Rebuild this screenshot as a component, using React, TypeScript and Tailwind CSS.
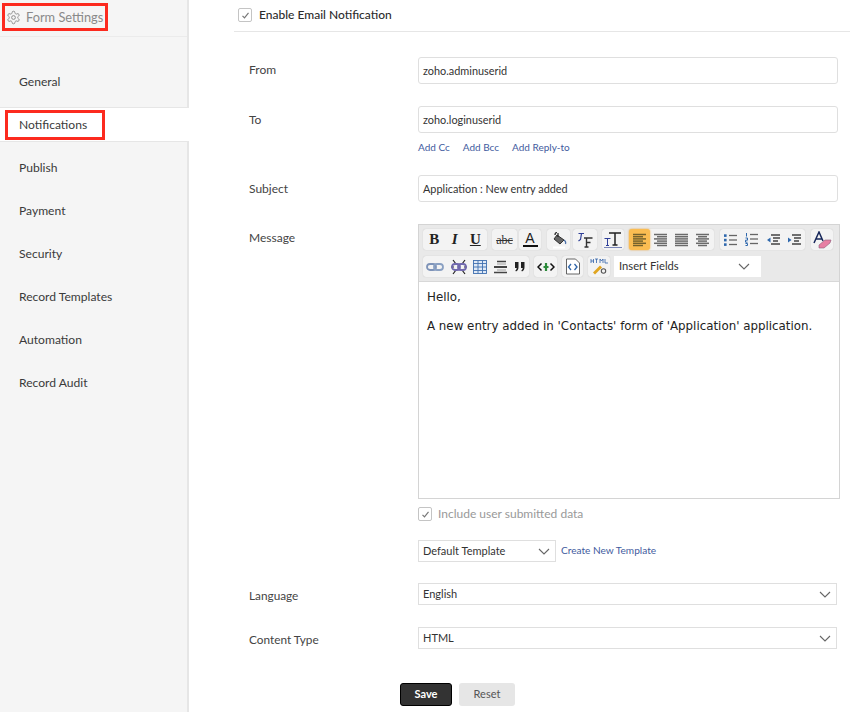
import React from "react";

const Chevron = () => (
  <svg width="12" height="7" viewBox="0 0 12 7" fill="none" stroke="#666" strokeWidth="1.1" className="shrink-0">
    <path d="M1 1l5 5 5-5" />
  </svg>
);

const Check = () => (
  <span className="flex h-[14px] w-[14px] shrink-0 items-center justify-center rounded-[2px] border border-[#c4c4c4] bg-white">
    <svg width="9" height="9" viewBox="0 0 9 9" fill="none" stroke="#777" strokeWidth="1.2">
      <path d="M1.5 4.8l2 2 4-5" />
    </svg>
  </span>
);

const Align = ({ rows, color = "#6a6a6a" }: { rows: [number, number][]; color?: string }) => (
  <svg width="15" height="14" viewBox="0 0 15 14" stroke={color} strokeWidth="1.5">
    {rows.map(([a, b], i) => (
      <path key={i} d={`M${a} ${1.5 + i * 2.2}H${b}`} />
    ))}
  </svg>
);

const Btn = ({ children, active = false }: { children: React.ReactNode; active?: boolean }) => (
  <span
    className={`flex h-full w-[21px] items-center justify-center ${
      active ? "rounded-[3px] bg-[#fbbd52] shadow-[0_0_2px_#f2a93a]" : ""
    }`}
  >
    {children}
  </span>
);

const Group = ({ children, w, className = "" }: { children: React.ReactNode; w: number; className?: string }) => (
  <span
    style={{ width: w }}
    className={`flex h-[21px] shrink-0 items-center justify-around rounded-[3px] bg-[#f3f3f3] shadow-[0_0_1px_#bbb] ${className}`}
  >
    {children}
  </span>
);

const Letter = ({ children, className = "" }: { children: React.ReactNode; className?: string }) => (
  <span className={`font-['Liberation_Serif',serif] text-[15px] font-bold leading-none text-[#222] ${className}`}>{children}</span>
);

const bullets = (
  <svg width="15" height="14" viewBox="0 0 15 14">
    {[2.5, 7, 11.5].map((y) => (
      <g key={y}>
        <rect x="1" y={y - 1.2} width="2.6" height="2.6" fill="#2f68ad" />
        <path d={`M6 ${y}H14`} stroke="#666" strokeWidth="1.3" />
      </g>
    ))}
  </svg>
);
const numbers = (
  <svg width="15" height="15" viewBox="0 0 15 15">
    <path d="M2.5 1v3.5M1.5 6h2v2.2h-2v2h2M1.5 11.5h2v2h-2" stroke="#2f68ad" strokeWidth="1" fill="none" />
    {[2.5, 7, 11.5].map((y) => (
      <path key={y} d={`M6 ${y}H14`} stroke="#666" strokeWidth="1.3" />
    ))}
  </svg>
);
const indent = (flip: boolean) => (
  <svg width="15" height="14" viewBox="0 0 15 14">
    <path d="M5 2H14M7 5H14M7 8H12M5 11H14" stroke="#444" strokeWidth="1.5" />
    <path d={flip ? "M4.5 4.5v5L1 7z" : "M1 4.5v5L4.5 7z"} fill="#2f68ad" />
  </svg>
);

const Toolbar = () => (
  <div className="border-b border-[#d8d8d8] bg-[#e9e9e9]">
    <div className="flex h-[31px] items-start pl-[4px] pt-[4px]">
      <Group w={64}>
        <Letter>B</Letter>
        <Letter className="italic">I</Letter>
        <Letter className="underline">U</Letter>
      </Group>
      <Group w={25} className="ml-[5px]">
        <span className="font-['Liberation_Serif',serif] text-[12px] leading-none text-[#333] line-through">abc</span>
      </Group>
      <Group w={22} className="ml-[2px]">
        <span className="flex flex-col items-center">
          <span className="font-['Liberation_Sans',sans-serif] text-[14px] leading-[13px] text-[#222]">A</span>
          <span className="h-[2px] w-[15px] bg-[#111]" />
        </span>
      </Group>
      <Group w={23} className="ml-[6px]">
        <svg width="18" height="18" viewBox="0 0 18 18">
          <path d="M7 4l7 5-4 4-6-5z" fill="#666" stroke="#222" strokeWidth="0.9" />
          <path d="M7 1.5c-1.5 0-2 1-2 2.5M8 2v4" stroke="#222" strokeWidth="1.2" fill="none" />
          <path d="M14 9c1.5 1 2 2.5 1.5 4" stroke="#4a6fa8" strokeWidth="1.2" fill="none" />
          <path d="M3 16.5h12" stroke="#fff" strokeWidth="2" />
        </svg>
      </Group>
      <Group w={24} className="ml-[3px]">
        <svg width="20" height="18" viewBox="0 0 20 18" fill="none">
          <path d="M3.5 2.5H9M6.5 2.5L5.5 8.5 3.5 10" stroke="#2f3f98" strokeWidth="1.2" />
          <path d="M9 7h8.5M11.5 7v9M9.5 16h4M11.5 11.5h4" stroke="#333" strokeWidth="1.4" />
        </svg>
      </Group>
      <Group w={22} className="ml-[5px]">
        <svg width="20" height="18" viewBox="0 0 20 18" fill="none">
          <path d="M6 2h12M12 2v12M9.5 14h5" stroke="#222" strokeWidth="1.5" />
          <path d="M1.5 7.5h6M4.5 7.5v7M3 14.5h3" stroke="#2f3f98" strokeWidth="1" />
          <path d="M1 16.5h18" stroke="#5a6aa8" strokeWidth="0.8" />
        </svg>
      </Group>
      <Group w={85} className="ml-[5px] !justify-start">
        <Btn active>
          <Align color="#75622c" rows={[[1, 14], [1, 11], [1, 14], [1, 11], [1, 14], [1, 11]]} />
        </Btn>
        <Btn>
          <Align rows={[[1, 14], [4, 14], [1, 14], [4, 14], [1, 14], [4, 14]]} />
        </Btn>
        <Btn>
          <Align rows={[[1, 14], [1, 14], [1, 14], [1, 14], [1, 14], [1, 14]]} />
        </Btn>
        <Btn>
          <Align rows={[[1, 14], [3, 12], [1, 14], [3, 12], [1, 14], [3, 12]]} />
        </Btn>
      </Group>
      <Group w={85} className="ml-[6px]">
        {bullets}
        {numbers}
        {indent(true)}
        {indent(false)}
      </Group>
      <Group w={22} className="ml-[6px]">
        <svg width="20" height="18" viewBox="0 0 20 18" fill="none">
          <path d="M2 12L7 1l4 9M4 8h6" stroke="#17275a" strokeWidth="1.5" />
          <path d="M7 14l6-5h6l-1 3-6 5H7z" fill="#e77fa3" stroke="#8f5a78" strokeWidth="0.6" />
        </svg>
      </Group>
    </div>
    <div className="flex h-[25px] items-start pl-[4px]">
      <Group w={106}>
        <svg width="18" height="14" viewBox="0 0 18 14" fill="none">
          <rect x="1" y="4" width="9" height="6" rx="3" stroke="#7e93b8" strokeWidth="1.8" />
          <rect x="8" y="4" width="9" height="6" rx="3" stroke="#8aa0c2" strokeWidth="1.8" />
        </svg>
        <svg width="18" height="18" viewBox="0 0 18 18" fill="none">
          <path d="M3 2l3 4M15 2l-3 4M1 9h3M17 9h-3M3 16l3-4M15 16l-3-4" stroke="#222" strokeWidth="1.2" />
          <rect x="2" y="6" width="8" height="6" rx="3" stroke="#7068ad" strokeWidth="1.8" />
          <rect x="8" y="6" width="8" height="6" rx="3" stroke="#7068ad" strokeWidth="1.8" />
        </svg>
        <svg width="14" height="14" viewBox="0 0 14 14" fill="#dfe9f6" stroke="#3f6fb0" strokeWidth="0.9">
          <rect x="0.5" y="0.5" width="13" height="13" />
          <path d="M0.5 3.5h13M0.5 7h13M0.5 10.5h13M5 0.5v13M9.5 0.5v13" />
        </svg>
        <svg width="15" height="14" viewBox="0 0 15 14" fill="none">
          <path d="M4 1.5h9M1 12.5h13" stroke="#444" strokeWidth="1.3" />
          <path d="M1 7h13" stroke="#444" strokeWidth="2" />
          <path d="M4 4h9M4 10h9" stroke="#888" strokeWidth="0.8" />
        </svg>
        <svg width="12" height="12" viewBox="0 0 12 12" fill="#222">
          <path d="M1 1h3.5v5c0 2-.7 3.5-2.5 4.500L1.300 9.500C2.300 8.800 2.700 8 2.700 7H1zM7 1h3.500v5c0 2-.7 3.500-2.500 4.500L7.300 9.500C8.300 8.800 8.700 8 8.700 7H7z" />
        </svg>
      </Group>
      <Group w={23} className="ml-[5px]">
        <svg width="18" height="10" viewBox="0 0 18 10" fill="none">
          <path d="M4.500 1.500L1 5l3.500 3.500M13.500 1.500L17 5l-3.500 3.500" stroke="#111" strokeWidth="1.5" />
          <path d="M9 1v8M6.500 5h5" stroke="#2c8a3a" strokeWidth="2.200" />
        </svg>
      </Group>
      <Group w={21} className="ml-[5px]">
        <svg width="16" height="17" viewBox="0 0 16 17" fill="#fff" stroke="#555" strokeWidth="0.9">
          <path d="M1.500 1h9l4 4v11h-13z" />
          <path d="M6 6L3.500 9 6 12M9.500 6l2.500 3-2.500 3" stroke="#2e64a8" strokeWidth="1.300" fill="none" />
        </svg>
      </Group>
      <Group w={22} className="ml-[5px]">
        <svg width="19" height="18" viewBox="0 0 19 18" fill="none">
          <path d="M1 1v4M3.500 1v4M1 3h2.500M5 1h3M6.500 1v4M10 5V1l1.500 2L13 1v4M15 1v4h3" stroke="#2e5fa8" strokeWidth="0.8" />
          <path d="M4 15.500l7-7" stroke="#e0a520" strokeWidth="2.800" />
          <circle cx="13.500" cy="13" r="2.200" stroke="#555" strokeWidth="1.100" />
        </svg>
      </Group>
      <span className="ml-[4px] flex h-[21px] w-[147px] shrink-0 items-center justify-between bg-white pl-[5px] pr-[11px] text-[11.2px] text-[#333]">
        Insert Fields
        <Chevron />
      </span>
    </div>
  </div>
);

const Label = ({ children, className = "pt-[6px]" }: { children: React.ReactNode; className?: string }) => (
  <div className={`ml-[45px] w-[169px] shrink-0 pl-[15px] text-[12px] leading-[16px] text-[#444] ${className}`}>{children}</div>
);

const Input = ({ children }: { children: React.ReactNode }) => (
  <div className="ml-[15px] flex h-[27px] w-[420px] items-center rounded-[3px] border border-[#dfdfdf] bg-white pl-[4px] pt-[1px] text-[10.9px] text-[#333]">
    {children}
  </div>
);

const Select = ({ children, className = "" }: { children: React.ReactNode; className?: string }) => (
  <div className={`flex h-[22px] items-center justify-between border border-[#dfdfdf] bg-white pl-[4px] pr-[5px] text-[11px] text-[#333] ${className}`}>
    {children}
    <Chevron />
  </div>
);

const nav = ["General", "Notifications", "Publish", "Payment", "Security", "Record Templates", "Automation", "Record Audit"];

export default function App() {
  return (
    <div className="relative flex h-[712px] w-[850px] overflow-hidden bg-white font-['Lato',sans-serif]">
      <aside className="relative h-full w-[189px] shrink-0 border-r-2 border-[#e6e6e6] bg-[#f5f5f5]">
        <div className="flex h-[37px] items-center gap-[5px] border-b border-[#ebebeb] pl-[6px] pb-[1px] text-[12.8px] text-[#8a8a8a]">
          <svg width="15" height="15" viewBox="0 0 24 24" fill="none" stroke="#8c8c8c" strokeWidth="1.6">
            <path d="M12.2 2h-.4a2 2 0 0 0-2 2v.2a2 2 0 0 1-1 1.7l-.4.3a2 2 0 0 1-2 0l-.2-.1a2 2 0 0 0-2.7.7l-.2.4a2 2 0 0 0 .7 2.7l.2.1a2 2 0 0 1 1 1.7v.6a2 2 0 0 1-1 1.7l-.2.1a2 2 0 0 0-.7 2.7l.2.4a2 2 0 0 0 2.7.7l.2-.1a2 2 0 0 1 2 0l.4.3a2 2 0 0 1 1 1.7v.2a2 2 0 0 0 2 2h.4a2 2 0 0 0 2-2v-.2a2 2 0 0 1 1-1.7l.4-.3a2 2 0 0 1 2 0l.2.1a2 2 0 0 0 2.7-.7l.2-.4a2 2 0 0 0-.7-2.7l-.2-.1a2 2 0 0 1-1-1.7v-.6a2 2 0 0 1 1-1.7l.2-.1a2 2 0 0 0 .7-2.7l-.2-.4a2 2 0 0 0-2.7-.7l-.2.1a2 2 0 0 1-2 0l-.4-.3a2 2 0 0 1-1-1.7V4a2 2 0 0 0-2-2z" />
            <circle cx="12" cy="12" r="3" />
          </svg>
          Form Settings
        </div>
        <nav className="pt-[24px]">
          {nav.map((n) =>
            n === "Notifications" ? (
              <div
                key={n}
                className="relative z-10 -mr-[2px] mb-[5px] mt-[3px] flex h-[35px] items-center border-y border-[#e6e6e6] bg-white pl-[19px] pt-[1px] text-[12.1px] text-[#3a3a3a]"
              >
                {n}
              </div>
            ) : (
              <div key={n} className="flex h-[43px] items-center pl-[19px] text-[12.1px] text-[#3a3a3a]">
                {n}
              </div>
            )
          )}
        </nav>
      </aside>

      <main className="min-w-0 flex-1">
        <div className="ml-[45px] flex h-[32px] items-start gap-[7px] border-b border-[#e6e6e6] pl-[4px] pt-[8px] text-[12px] font-medium text-[#2c2c2c]">
          <Check />
          <span className="leading-[14px]">Enable Email Notification</span>
        </div>

        <div className="mt-[25px] flex h-[27px] items-start">
          <Label className="pt-[5px]">From</Label>
          <Input>zoho.adminuserid</Input>
        </div>

        <div className="mt-[22px] flex h-[27px] items-start">
          <Label>To</Label>
          <Input>zoho.loginuserid</Input>
        </div>

        <div className="ml-[229px] mt-[8px] flex h-[13px] items-center gap-[13px] text-[10px] text-[#3f5b9e]">
          <span>Add Cc</span>
          <span>Add Bcc</span>
          <span>Add Reply-to</span>
        </div>

        <div className="mt-[21px] flex h-[27px] items-start">
          <Label>Subject</Label>
          <Input>Application : New entry added</Input>
        </div>

        <div className="mt-[22px] flex items-start">
          <Label>Message</Label>
          <div className="ml-[15px] h-[275px] w-[422px] overflow-hidden border border-[#d4d4d4] bg-white">
            <Toolbar />
            <div className="px-[8px] pt-[8px] font-['DejaVu_Sans',sans-serif] text-[11.85px] leading-[14px] text-[#222]">
              <p>Hello,</p>
              <p className="mt-[15px]">A new entry added in 'Contacts' form of 'Application' application.</p>
            </div>
          </div>
        </div>

        <div className="ml-[229px] mt-[8px] flex h-[14px] items-center gap-[6px] text-[12px] text-[#999]">
          <Check />
          <span>Include user submitted data</span>
        </div>

        <div className="ml-[229px] mt-[19px] flex items-center gap-[5px]">
          <Select className="w-[138px]">Default Template</Select>
          <span className="text-[10.1px] text-[#3f5b9e]">Create New Template</span>
        </div>

        <div className="mt-[21px] flex items-center">
          <div className="ml-[45px] w-[169px] shrink-0 pl-[15px] pt-[3px] text-[11.8px] text-[#444]">Language</div>
          <Select className="ml-[15px] w-[419px] pt-[1px]">English</Select>
        </div>

        <div className="mt-[22px] flex items-center">
          <div className="ml-[45px] w-[169px] shrink-0 pl-[15px] pt-[3px] text-[11.8px] text-[#444]">Content Type</div>
          <Select className="ml-[15px] w-[419px] pt-[1px]">HTML</Select>
        </div>

        <div className="ml-[211px] mt-[34px] flex gap-[7px]">
          <button className="flex h-[23px] w-[52px] items-center justify-center rounded-[3px] border border-black bg-[#333] text-[11px] font-bold text-white">
            Save
          </button>
          <button className="flex h-[23px] w-[56px] items-center justify-center rounded-[3px] bg-[#e6e6e6] text-[11px] text-[#555]">
            Reset
          </button>
        </div>
      </main>

      <div className="absolute left-[2px] top-[3px] z-20 h-[28px] w-[106px] border-[3px] border-[#fc2a1f]" />
      <div className="absolute left-[5px] top-[110px] z-20 h-[30px] w-[100px] border-[3px] border-[#fc2a1f]" />
    </div>
  );
}
